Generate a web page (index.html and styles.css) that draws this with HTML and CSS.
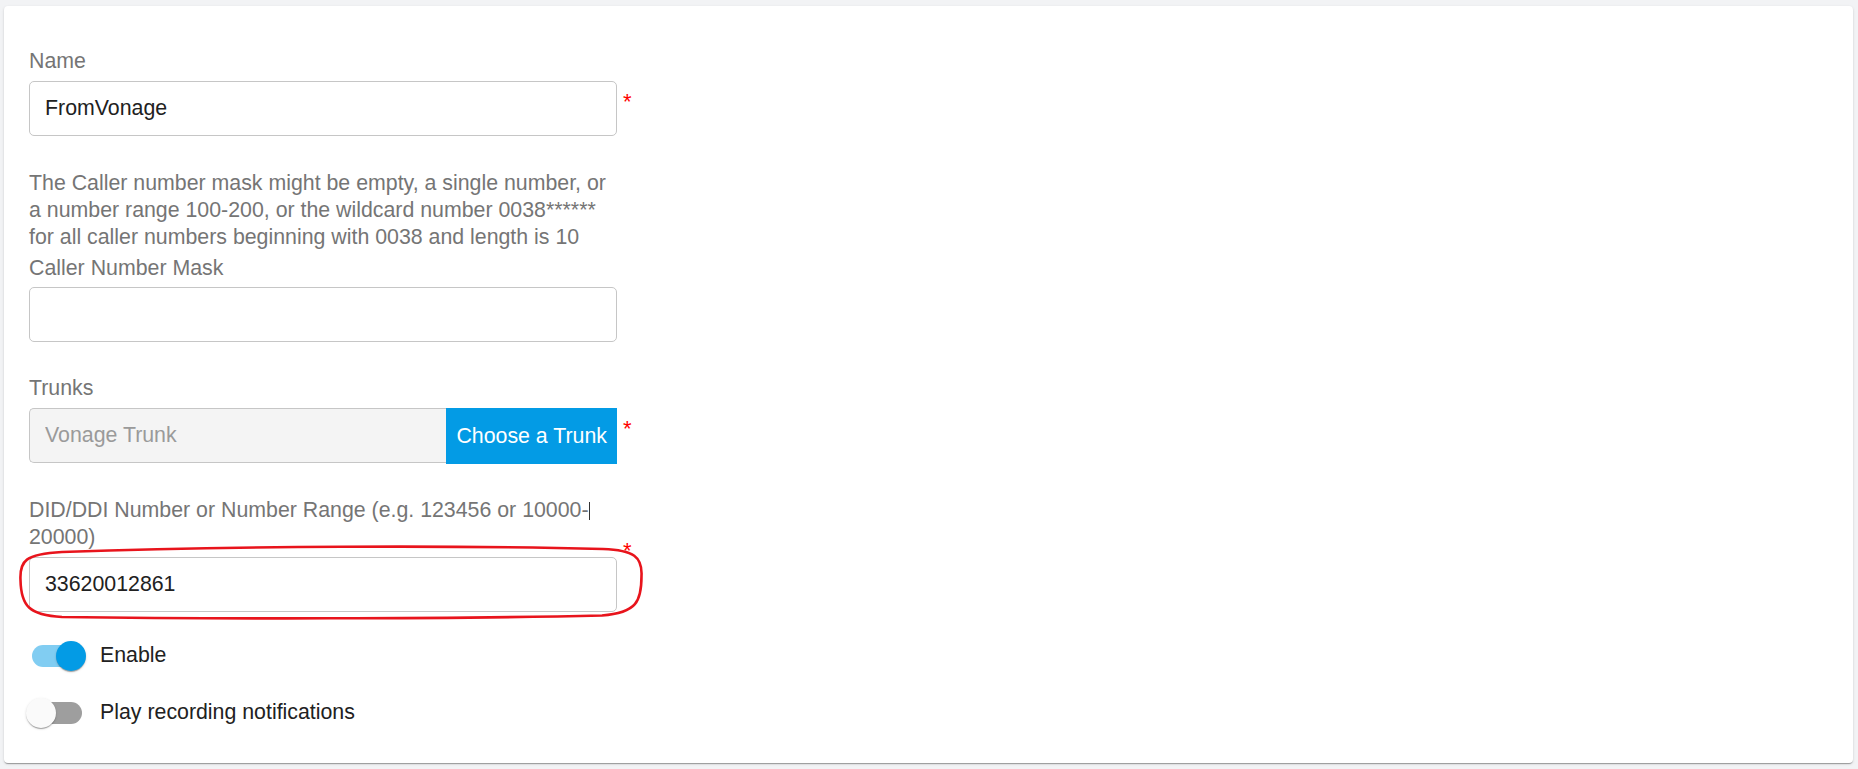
FILE: index.html
```html
<!DOCTYPE html>
<html lang="en">
<head>
<meta charset="utf-8">
<title>Inbound rule</title>
<link rel="stylesheet" href="styles.css">
</head>
<body>
<div class="card">
  <div class="field field-name">
    <div class="field-body">
      <label class="label">Name</label>
      <input class="input" type="text" value="FromVonage">
    </div>
    <span class="req">*</span>
  </div>

  <div class="field field-mask">
    <div class="field-body">
      <p class="hint">The Caller number mask might be empty, a single number, or<br>a number range 100-200, or the wildcard number 0038******<br>for all caller numbers beginning with 0038 and length is 10</p>
      <label class="label label-mask">Caller Number Mask</label>
      <input class="input" type="text" value="">
    </div>
  </div>

  <div class="field field-gap">
    <div class="field-body">
      <label class="label">Trunks</label>
      <div class="picker">
        <input class="input input-picker" type="text" value="Vonage Trunk" readonly>
        <button class="btn" type="button">Choose a Trunk</button>
      </div>
    </div>
    <span class="req">*</span>
  </div>

  <div class="field field-gap field-did">
    <div class="field-body">
      <label class="label">DID/DDI Number or Number Range (e.g. 123456 or 10000-<span class="caret"></span><br>20000)</label>
      <input class="input" type="text" value="33620012861">
    </div>
    <span class="req">*</span>
    <svg class="highlight" viewBox="17 544 628 76" width="628" height="76" aria-hidden="true">
      <path d="M20.5,580 C19.5,561 25,554 62,552 C240,546 450,545 603,549 C634,550 642.5,557 641.5,576 C641.5,601 637,613 602,615.5 C450,619 210,619 62,617 C29,615 21,606 20.5,580 Z" fill="none" stroke="#e8141c" stroke-width="2.6"/>
    </svg>
  </div>

  <div class="toggles">
    <div class="toggle-row">
      <span class="switch switch-on"><span class="track"></span><span class="thumb"></span></span>
      <span class="toggle-label">Enable</span>
    </div>
    <div class="toggle-row">
      <span class="switch"><span class="track"></span><span class="thumb"></span></span>
      <span class="toggle-label">Play recording notifications</span>
    </div>
  </div>
</div>
</body>
</html>
```

FILE: styles.css
```css
* {
  box-sizing: border-box;
}

html, body {
  margin: 0;
  height: 100%;
}

body {
  background: #f2f3f5;
  padding: 6px 5px 6px 4px;
  font-family: "Liberation Sans", Arial, sans-serif;
  font-size: 21.33px;
  overflow: hidden;
}

.card {
  background: #ffffff;
  height: 757px;
  border-radius: 4px;
  box-shadow: 0 2px 1px -1px rgba(0, 0, 0, 0.2), 0 1px 1px 0 rgba(0, 0, 0, 0.14), 0 1px 3px 0 rgba(0, 0, 0, 0.12);
  padding: 42px 25px 0 25px;
}

.field {
  display: flex;
  align-items: flex-start;
  position: relative;
}

.field-body {
  width: 588px;
  display: flex;
  flex-direction: column;
}

.field-mask {
  margin-top: 34px;
}

.field-gap {
  margin-top: 33px;
}

.label {
  display: block;
  color: #757575;
  line-height: 27px;
  margin-bottom: 6px;
}

.label-mask {
  margin-bottom: 5px;
}

.hint {
  margin: 0 0 4px 0;
  color: #757575;
  line-height: 27px;
  white-space: nowrap;
}

.caret {
  display: inline-block;
  width: 1.5px;
  height: 18px;
  background: #333;
  vertical-align: -3px;
}

.input {
  display: block;
  width: 100%;
  height: 55px;
  margin: 0;
  border: 1px solid #c6c6c6;
  border-radius: 5px;
  padding: 0 15px;
  font-family: "Liberation Sans", Arial, sans-serif;
  font-size: 21.33px;
  color: #212121;
  background: #ffffff;
  outline: none;
}

.picker {
  display: flex;
}

.input-picker {
  flex: 1;
  width: auto;
  min-width: 0;
  background: #f4f4f4;
  color: #9a9a9a;
  border-right: none;
  border-radius: 5px 0 0 5px;
}

.btn {
  height: 56px;
  margin: 0;
  border: none;
  border-radius: 0;
  background: #039be5;
  color: #ffffff;
  font-family: "Liberation Sans", Arial, sans-serif;
  font-size: 21.33px;
  padding: 0 10px;
  white-space: nowrap;
}

.req {
  color: #ff0000;
  font-size: 22px;
  line-height: 22px;
  margin-left: 6px;
  margin-top: 43px;
}

.highlight {
  position: absolute;
  left: -12px;
  top: 47px;
  overflow: visible;
  pointer-events: none;
}

.toggles {
  margin-top: 15px;
  margin-left: -3px;
}

.toggle-row {
  display: flex;
  align-items: center;
  height: 57px;
}

.switch {
  position: relative;
  width: 60px;
  height: 30px;
  flex: none;
}

.track {
  position: absolute;
  left: 6px;
  top: 4px;
  width: 50px;
  height: 22px;
  border-radius: 11px;
  background: #9e9e9e;
}

.thumb {
  position: absolute;
  left: 0;
  top: 0;
  width: 30px;
  height: 30px;
  border-radius: 50%;
  background: #fafafa;
  box-shadow: 0 2px 1px -1px rgba(0, 0, 0, 0.2), 0 1px 1px 0 rgba(0, 0, 0, 0.14), 0 1px 3px 0 rgba(0, 0, 0, 0.12);
}

.switch-on .track {
  background: #81cdf2;
}

.switch-on .thumb {
  left: 30px;
  background: #039be5;
}

.toggle-label {
  margin-left: 14px;
  color: #212121;
  line-height: 27px;
}
```
